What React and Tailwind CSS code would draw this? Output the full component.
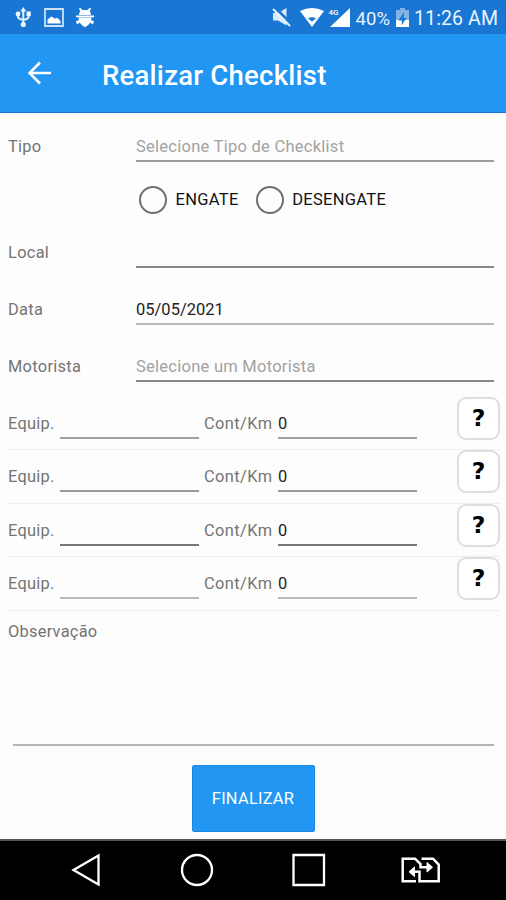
import React from "react";

function FormRow({ label, height, children, line }) {
  return (
    <div className={`flex ${height}`}>
      <label className="w-[128px] shrink-0 text-[16.4px] tracking-[0.3px] leading-[20px] text-[#747474]">{label}</label>
      <div className={`h-[25px] w-[358px] border-b-2 text-[16.5px] leading-[20px] ${line}`}>{children}</div>
    </div>
  );
}

function Radio({ label }) {
  return (
    <div className="flex items-center">
      <span className="h-[28px] w-[28px] rounded-full border-[2.5px] border-[#707070]" />
      <span className="ml-[8.5px] pt-px text-[16.5px] leading-[20px] tracking-[0.3px] text-[#111]">{label}</span>
    </div>
  );
}

function EquipRow({ line }) {
  return (
    <div className="relative ml-2 mr-[6px] flex h-[53.4px] border-b border-[#ededed] pt-[17px] text-[16.4px] leading-[20px] text-[#747474]">
      <span className="w-[52px] tracking-[0.25px]">Equip.</span>
      <span className={`h-[25px] w-[139px] border-b-2 ${line}`} />
      <span className="ml-[5px] w-[74px] whitespace-nowrap tracking-[0.4px]">Cont/Km</span>
      <span className={`h-[25px] w-[139px] border-b-2 ${line}`}>
        <span className="text-[#222]">0</span>
      </span>
      <button className="absolute right-0 top-0 h-[43px] w-[43px] rounded-[9px] border-2 border-[#dedede] bg-white font-['DejaVu_Sans',sans-serif] text-[23.5px] font-bold leading-[39px] text-black">?</button>
    </div>
  );
}

function StatusBar() {
  return (
    <div className="flex h-[34px] items-center bg-[#1976d2] text-white">
      <svg width="506" height="34" viewBox="0 0 506 34" fill="none">
        <g stroke="#e4f1fc" strokeWidth="2">
          <path d="M23.300 10v14M17.800 13v3q0 3 5.500 4M28.800 13v3q0 3-5.500 4" />
        </g>
        <g fill="#f0f8ff">
          <path d="m23.300 7 3 4.500h-6z" />
          <circle cx="23.300" cy="24.500" r="2.600" />
          <circle cx="18" cy="14" r="2.400" />
          <path d="M26.500 11.500h4.300v4.500h-4.300z" />
        </g>
        <path d="M45 9h18v17H45z" stroke="#c9e2f7" strokeWidth="1.800" />
        <path d="M47.500 23.500v-4l4-3 3 2 3-.5 3 3v2.500z" fill="white" />
        <g fill="white">
          <path d="M79 15q0-5 6-5t6 5zM78.500 17.500h13q0 6.500-6.500 9.800-6.500-3.300-6.500-9.800z" />
          <path d="M76 15.500h18v1.700H76zM76 21l4-1v2.500l-3 2zM94 21l-4-1v2.500l3 2z" />
          <path d="M79 8h1.500l3 3-3 1.500zM91 8h-1.500l-3 3 3 1.500z" />
        </g>
        <g fill="#d9ebfa">
          <path d="M273 13h5l8.500-5v17.500L278 20.500h-5z" />
        </g>
        <path d="m274.500 7 17 17" stroke="#1976d2" strokeWidth="2.500" />
        <path d="m273 9 17 17" stroke="#e4f1fc" strokeWidth="2" />
        <path d="M300 11q12-6 24 0l-12 16z" fill="white" />
        <path d="M308 18.500q4-2.500 8 0l-4 3z" fill="#1976d2" />
        <path d="M350 8v19h-20z" fill="white" />
        <text x="328.500" y="14.500" fill="white" fontSize="8" fontWeight="500" textLength="10" lengthAdjust="spacingAndGlyphs" fontFamily="Roboto">4G</text>
        <path d="M400 8h5v2h4v17h-13V10h4z" fill="#7fb4e5" />
        <path d="M396 20h13v7h-13z" fill="white" />
        <path d="m404 12-5.500 8.500h3.500l-.5 5 5-7.500h-3z" fill="#1976d2" />
        <text x="355.500" y="24.500" fill="#e9f4ff" fontSize="18.500" textLength="34.500" fontFamily="Roboto">40%</text>
        <text x="414" y="24.800" fill="#e9f4ff" fontSize="19.500" textLength="84" fontFamily="Roboto">11:26 AM</text>
      </svg>
    </div>
  );
}

function NavigationBar() {
  return (
    <nav className="h-[61px] shrink-0 border-t-2 border-[#555] bg-black">
      <svg width="506" height="59" viewBox="0 841 506 59" fill="none" stroke="white" strokeWidth="2.300">
        <path d="M98.500 855.500v29L73.500 870z" />
        <circle cx="197" cy="870" r="15" />
        <path d="M293.500 855h30.500v30h-30.500z" />
        <path d="M416 881.300H402.700V858.700H415L420.500 864v3.300H429M421.500 858.700h11.500L438.700 864.500v16.800H419.500v-9.500H411" strokeWidth="2.500" />
        <path d="m427 862.500 5.500 4.800-5.500 4.800zM414.500 867l-5.500 4.800 5.500 4.800z" fill="white" strokeWidth="1" />
      </svg>
    </nav>
  );
}

export default function App() {
  return (
    <div className="flex h-[900px] w-[506px] flex-col overflow-hidden bg-[#fdfdfd] font-[Roboto,sans-serif]">
      <StatusBar />
      <header className="flex h-[79px] shrink-0 items-center border-b border-[#1976d2] bg-[#2196f3] pl-[28px] text-white">
        <svg width="24" height="24" viewBox="0 0 24 24" fill="none" stroke="white" strokeWidth="2.600">
          <path d="M23 12H2M12 1.500 1.500 12 12 22.500" />
        </svg>
        <h1 className="ml-[50px] mt-[5px] text-[27.5px] font-medium leading-[32px] tracking-[0.25px]">Realizar Checklist</h1>
      </header>
      <main className="flex min-h-0 flex-1 flex-col">
        <form className="flex flex-col pl-2 pt-6">
          <FormRow label="Tipo" height="h-[49px]" line="border-[#9b9b9b] text-[#a2a2a2] tracking-[0.26px]">Selecione Tipo de Checklist</FormRow>
          <div className="ml-[131px] flex h-[57px] gap-[17px] pb-[30px]">
            <Radio label="ENGATE" />
            <Radio label="DESENGATE" />
          </div>
          <FormRow label="Local" height="h-[57px]" line="border-[#888]" />
          <FormRow label="Data" height="h-[57px]" line="border-[#b8b8b8] text-[#222]">05/05/2021</FormRow>
          <FormRow label="Motorista" height="h-[40px]" line="border-[#888] text-[#a2a2a2] tracking-[0.26px]">Selecione um Motorista</FormRow>
        </form>
        <EquipRow line="border-[#a0a0a0]" />
        <EquipRow line="border-[#999]" />
        <EquipRow line="border-[#777]" />
        <EquipRow line="border-[#bababa]" />
        <div className="ml-[8px] mr-[12px] h-[135.400px] pt-[11px]">
          <div className="text-[16.4px] leading-[20px] tracking-[0.25px] text-[#747474]">Observação</div>
          <div className="ml-[5px] h-[104.400px] border-b-2 border-[#b5b5b5]" />
        </div>
        <button className="mt-[19px] h-[67px] w-[123px] self-center rounded-[2px] border border-[#1788e4] bg-[#2196f3] pt-px text-[16.4px] tracking-[0.25px] text-white">FINALIZAR</button>
      </main>
      <NavigationBar />
    </div>
  );
}
